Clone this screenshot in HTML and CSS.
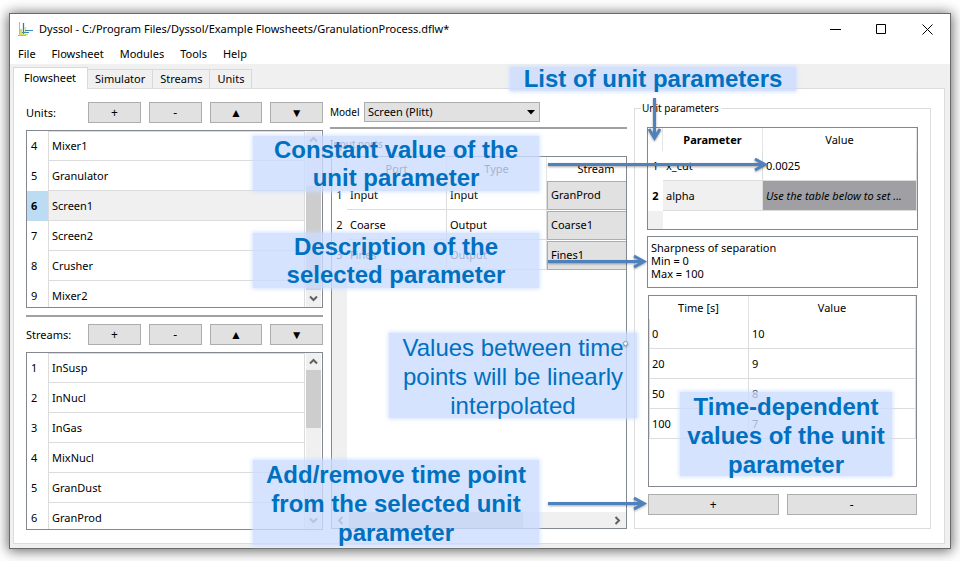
FILE: index.html
```html
<!DOCTYPE html>
<html lang="en">
<head>
<meta charset="utf-8">
<title>Dyssol</title>
<link rel="stylesheet" href="styles.css">
</head>
<body>
<main class="window">
  <header class="titlebar">
    <svg class="app-icon" width="16" height="16" viewBox="0 0 16 16" aria-hidden="true">
      <path d="M1.500 1v13" stroke="#8cc3d6" stroke-width="1" fill="none"/>
      <path d="M3 8v6" stroke="#d9dd52" stroke-width="2" fill="none"/>
      <path d="M5.500 2v12" stroke="#2a7fa8" stroke-width="1.300" fill="none"/>
      <path d="M7.500 6v5" stroke="#e3df6a" stroke-width="1.500" fill="none"/>
      <path d="M1 13.500h9" stroke="#dcdc5a" stroke-width="1.500" fill="none"/>
      <path d="M4 11.500h7M7 9.500h8" stroke="#3b8db5" stroke-width="1" fill="none"/>
      <path d="M0 14.500h8" stroke="#8cc3b0" stroke-width="1" fill="none"/>
    </svg>
    <h1 class="title">Dyssol - C:/Program Files/Dyssol/Example Flowsheets/GranulationProcess.dflw*</h1>
    <button class="win-btn" aria-label="Minimize"><svg width="11" height="11" viewBox="0 0 11 11"><path d="M0 5.500h11"/></svg></button>
    <button class="win-btn" aria-label="Maximize"><svg width="11" height="11" viewBox="0 0 11 11"><path d="M.5 .5h9v9h-9z"/></svg></button>
    <button class="win-btn" aria-label="Close"><svg width="11" height="11" viewBox="0 0 11 11"><path d="M.5 .5l10 10M10.500 .5l-10 10"/></svg></button>
  </header>
  <nav class="menu">
    <button>File</button><button>Flowsheet</button><button>Modules</button><button>Tools</button><button>Help</button>
  </nav>
  <div class="tabs" role="tablist">
    <button class="tab active" role="tab" aria-selected="true">Flowsheet</button>
    <button class="tab" role="tab">Simulator</button>
    <button class="tab" role="tab">Streams</button>
    <button class="tab" role="tab">Units</button>
  </div>
  <div class="pane">
    <section class="column">
      <div class="toolbar"><span>Units:</span><button class="btn">+</button><button class="btn">-</button><button class="btn">▲</button><button class="btn">▼</button></div>
      <div class="list">
        <table class="grid">
          <tbody>
            <tr><th>4</th><td>Mixer1</td></tr>
            <tr><th>5</th><td>Granulator</td></tr>
            <tr class="selected"><th>6</th><td>Screen1</td></tr>
            <tr><th>7</th><td>Screen2</td></tr>
            <tr><th>8</th><td>Crusher</td></tr>
            <tr><th>9</th><td>Mixer2</td></tr>
          </tbody>
        </table>
        <div class="scroll">
          <svg class="chev" viewBox="0 0 9 7"><path d="M1 5.500L4.500 2L8 5.500"/></svg>
          <div class="track end"><div class="thumb long"></div></div>
          <svg class="chev" viewBox="0 0 9 7"><path d="M1 1.500L4.500 5L8 1.500"/></svg>
        </div>
      </div>
      <hr class="split">
      <div class="toolbar"><span>Streams:</span><button class="btn">+</button><button class="btn">-</button><button class="btn">▲</button><button class="btn">▼</button></div>
      <div class="list">
        <table class="grid">
          <tbody>
            <tr><th>1</th><td>InSusp</td></tr>
            <tr><th>2</th><td>InNucl</td></tr>
            <tr><th>3</th><td>InGas</td></tr>
            <tr><th>4</th><td>MixNucl</td></tr>
            <tr><th>5</th><td>GranDust</td></tr>
            <tr><th>6</th><td>GranProd</td></tr>
          </tbody>
        </table>
        <div class="scroll">
          <svg class="chev" viewBox="0 0 9 7"><path d="M1 5.500L4.500 2L8 5.500"/></svg>
          <div class="track"><div class="thumb"></div></div>
          <svg class="chev" viewBox="0 0 9 7"><path d="M1 1.500L4.500 5L8 1.500"/></svg>
        </div>
      </div>
    </section>

    <section class="column model">
      <div class="model-row">
        <label for="model">Model</label>
        <span class="combo">
          <select id="model"><option>Screen (Plitt)</option></select>
          <svg class="caret" width="8" height="5" viewBox="0 0 8 5" aria-hidden="true"><path d="M0 0h8L4 4.500z"/></svg>
        </span>
      </div>
      <hr class="split">
      <div class="caption">Input ports</div>
      <div class="ports">
        <div class="ports-body">
          <table class="grid fixed">
            <colgroup><col class="c-num"><col class="c-mid"><col class="c-mid"><col></colgroup>
            <thead><tr><th></th><th>Port</th><th>Type</th><th class="stream">Stream</th></tr></thead>
            <tbody>
              <tr><th>1</th><td>Input</td><td>Input</td><td class="cell-btn"><button>GranProd</button></td></tr>
              <tr><th>2</th><td>Coarse</td><td>Output</td><td class="cell-btn"><button>Coarse1</button></td></tr>
              <tr><th>3</th><td>Fines</td><td>Output</td><td class="cell-btn"><button>Fines1</button></td></tr>
            </tbody>
          </table>
        </div>
        <div class="scroll horizontal">
          <svg class="chev" viewBox="0 0 7 9"><path d="M5.500 1L2 4.500L5.500 8"/></svg>
          <div class="track"><div class="thumb"></div></div>
          <svg class="chev" viewBox="0 0 7 9"><path d="M1.500 1L5 4.500L1.500 8"/></svg>
        </div>
      </div>
    </section>

    <fieldset class="params">
      <legend>Unit parameters</legend>
      <div class="param-table">
        <table class="grid fixed">
          <colgroup><col class="c-num"><col class="c-mid"><col></colgroup>
          <thead><tr><th></th><th class="strong">Parameter</th><th>Value</th></tr></thead>
          <tbody>
            <tr><th>1</th><td>x_cut</td><td>0.0025</td></tr>
            <tr class="current"><th>2</th><td>alpha</td><td class="locked">Use the table below to set ...</td></tr>
          </tbody>
        </table>
      </div>
      <p class="description">Sharpness of separation<br>Min = 0<br>Max = 100</p>
      <div class="time-table">
        <table class="grid fixed times">
          <colgroup><col class="c-mid"><col></colgroup>
          <thead><tr><th>Time [s]</th><th>Value</th></tr></thead>
          <tbody>
            <tr><td>0</td><td>10</td></tr>
            <tr><td>20</td><td>9</td></tr>
            <tr><td>50</td><td>8</td></tr>
            <tr><td>100</td><td>7</td></tr>
          </tbody>
        </table>
      </div>
      <div class="time-actions"><button class="btn">+</button><button class="btn">-</button></div>
    </fieldset>
  </div>
</main>

<div class="note note-list">List of unit parameters</div>
<div class="note note-constant">Constant value of the<br>unit parameter</div>
<div class="note note-description">Description of the<br>selected parameter</div>
<div class="note note-values">Values between time<br>points will be linearly<br>interpolated</div>
<div class="note note-time">Time-dependent<br>values of the unit<br>parameter</div>
<div class="note note-add">Add/remove time point<br>from the selected unit<br>parameter</div>
<svg class="arrows" width="960" height="561" viewBox="0 0 960 561" aria-hidden="true">
  <path d="M654.500 98V137M649 129L654.500 138L660 129"/>
  <path d="M548 164.500H764M755 159L765 164.500L755 170"/>
  <path d="M548 261.500H643M634 256L644 261.500L634 267"/>
  <path d="M548 503.500H643M634 498L644 503.500L634 509"/>
  <circle cx="625.500" cy="343.500" r="2"/>
</svg>
</body>
</html>
```

FILE: styles.css
```css
* { box-sizing: border-box; }

body {
  margin: 0;
  height: 100vh;
  padding: 13px 9px 12px;
  display: flex;
  position: relative;
  overflow: hidden;
  background: #fff;
  color: #000;
  font: 11px/16px "Noto Sans", "Open Sans", sans-serif;
}

button, select {
  font: inherit;
  color: inherit;
  margin: 0;
  padding: 0;
  border: 0;
  border-radius: 0;
  background: none;
}

.window {
  flex: 1;
  min-width: 0;
  display: flex;
  flex-direction: column;
  padding-bottom: 4px;
  border: 1px solid #6a6a6a;
  background: #f0f0f0;
  box-shadow: 0 1px 12px 1px rgba(0, 0, 0, .6);
}

.titlebar {
  height: 30px;
  flex: none;
  display: flex;
  align-items: center;
  padding-left: 8px;
  background: #fff;
}
.app-icon { margin-right: 5px; }
.title {
  flex: 1;
  margin: 0;
  font-size: 11px;
  font-weight: 400;
  white-space: nowrap;
}
.win-btn {
  width: 46px;
  height: 30px;
  display: flex;
  align-items: center;
  justify-content: center;
}
.win-btn path { fill: none; stroke: #000; stroke-width: 1; }

.menu {
  height: 20px;
  flex: none;
  display: flex;
  gap: 16px;
  padding-left: 8px;
  background: #fff;
}

.tabs {
  height: 24px;
  flex: none;
  display: flex;
  align-items: flex-end;
  padding-left: 3px;
}
.tab {
  height: 19px;
  padding: 0 7px;
  border: 1px solid #d9d9d9;
  border-left: 0;
  border-bottom: 0;
}
.tab.active {
  height: 22px;
  margin-bottom: -1px;
  padding: 0 11px 1px 10px;
  position: relative;
  border-left: 1px solid #d9d9d9;
  background: #fff;
}

.pane {
  flex: 1;
  min-height: 0;
  margin: 0 5px 0 3px;
  padding: 13px 13px 13px 12px;
  display: grid;
  grid-template-columns: repeat(3, minmax(0, 1fr));
  grid-template-rows: minmax(0, 1fr);
  gap: 7px;
  border: 1px solid #dcdcdc;
  background: #fff;
}

.column {
  display: flex;
  flex-direction: column;
  gap: 7px;
  min-height: 0;
}

.toolbar {
  flex: none;
  height: 21px;
  display: grid;
  grid-template-columns: 54px repeat(4, 1fr);
  gap: 8px;
  align-items: center;
}
.btn {
  height: 21px;
  border: 1px solid #adadad;
  background: #e1e1e1;
  font-size: 12px;
  line-height: 18px;
}

.split {
  flex: none;
  width: 100%;
  height: 2px;
  margin: 0;
  border: 0;
  background: #a0a0a0;
}

.list, .ports, .param-table, .time-table {
  border: 1px solid #828790;
  background: #fff;
  overflow: hidden;
}
.list { flex: 1 1 0; min-height: 0; display: flex; align-items: flex-start; }

.grid {
  width: 100%;
  border-collapse: separate;
  border-spacing: 0;
}
.fixed { table-layout: fixed; }
.c-num { width: 15px; }
.c-mid { width: 100px; }
.grid th, .grid td { padding: 0 3px; font-weight: 400; white-space: nowrap; }
.grid tbody tr { height: 30px; }
.grid thead tr { height: 23px; }
.grid tbody th { width: 22px; text-align: left; border-right: 1px solid #dcdcdc; }
.grid td { border-right: 1px solid #dcdcdc; border-bottom: 1px solid #dcdcdc; }
.grid thead th { border-right: 1px solid #e5e5e5; text-align: center; }
.grid thead .strong { font-weight: 700; }
.fixed tbody th { text-align: center; padding: 0; border-right: 0; }
.times tbody td:first-child { padding-left: 2px; border-left: 1px solid #dcdcdc; }

.list .grid { flex: 1; }
.list .grid th { padding-left: 4px; }
.list .grid tr:first-child td { border-top: 1px solid #dcdcdc; }
.selected th { background: #bcdcf4; }
.list .selected th, .fixed .current th { font-weight: 700; }
.selected td, .current td { background: #f0f0f0; }

.scroll {
  flex: none;
  align-self: stretch;
  width: 15px;
  margin: 0 1px;
  display: flex;
  flex-direction: column;
  align-items: center;
  background: #f0f0f0;
}
.chev { flex: none; width: 9px; height: 7px; margin: 5px 0; }
.chev path { fill: none; stroke: #606060; stroke-width: 2; }
.track { flex: 1; width: 100%; min-height: 0; display: flex; flex-direction: column; }
.track.end { justify-content: flex-end; }
.thumb { height: 41%; background: #cdcdcd; }
.thumb.long { height: 73%; }

.model-row {
  flex: none;
  height: 20px;
  margin-bottom: -2px;
  display: flex;
  align-items: center;
}
.model-row label { width: 34px; font-size: 10px; }
.combo { position: relative; width: 176px; height: 20px; }
.combo select {
  width: 100%;
  height: 100%;
  padding-left: 3px;
  appearance: none;
  border: 1px solid #adadad;
  background: #e1e1e1;
}
.caret { position: absolute; right: 5px; top: 8px; }

.caption { flex: none; height: 14px; line-height: 14px; margin: 1px 0 -2px; font-size: 10px; }
.model { padding-bottom: 1px; }
.ports {
  flex: 1 1 0;
  min-height: 0;
  margin-left: 1px;
  display: flex;
  flex-direction: column;
}
.ports-body {
  flex: 1;
  min-height: 0;
  background: linear-gradient(90deg, #f0f0f0 15px, #fff 15px);
}
.ports-body .grid th { background: #fff; }
.grid thead .stream { padding-left: 22px; border-right: 0; }
.grid .cell-btn { padding: 0; border: 0; height: 30px; }
.cell-btn button {
  display: block;
  width: 100%;
  height: 29px;
  padding: 0 3px;
  text-align: left;
  border: 1px solid #adadad;
  border-right: 0;
  background: #e1e1e1;
}
.horizontal {
  flex-direction: row;
  width: auto;
  height: 16px;
  margin: 0;
}
.horizontal .chev { width: 7px; height: 9px; margin: 0 5px; }
.horizontal .track { height: 100%; flex-direction: row; }
.horizontal .thumb { width: 67%; height: 100%; }

.params {
  min-width: 0;
  min-height: 0;
  margin: 0 0 1px;
  padding: 13px 12px;
  display: flex;
  flex-direction: column;
  gap: 6px;
  border: 1px solid #dcdcdc;
}
.params legend { margin-left: -6px; padding: 0 2px 0 1px; font-size: 10px; line-height: 12px; }
.param-table {
  flex: none;
  height: 103px;
  background: linear-gradient(90deg, #f0f0f0 15px, #fff 15px);
}
.param-table .grid th { background: #fff; }
.grid .locked { background: #a0a0a4; font-style: italic; }
.description {
  flex: none;
  height: 52px;
  margin: 0;
  padding: 4px 3px;
  border: 1px solid #828790;
  line-height: 13px;
}
.time-table { flex: 1; min-height: 0; margin: 1px; }
.time-actions {
  display: grid;
  grid-template-columns: 1fr 1fr;
  gap: 8px;
  margin: 0 1px;
}

.note {
  position: absolute;
  color: #0070c0;
  background: rgba(202, 220, 255, .8);
  box-shadow: 0 0 4px 1px rgba(202, 220, 255, .8);
  font: 700 24px/29px "Liberation Sans", Arial, sans-serif;
  text-align: center;
  white-space: nowrap;
}
.note-list { left: 510px; top: 67px; width: 286px; height: 24px; line-height: 24px; }
.note-constant { left: 253px; top: 136px; width: 286px; height: 55px; line-height: 28px; }
.note-description { left: 253px; top: 233px; width: 286px; height: 55px; line-height: 28px; }
.note-values { left: 389px; top: 333px; width: 248px; height: 85px; }
.note-values { font-weight: 400; }
.note-time { left: 680px; top: 392px; width: 212px; height: 84px; }
.note-add { left: 253px; top: 460px; width: 286px; height: 85px; }

.arrows {
  position: absolute;
  left: 0;
  top: 0;
  pointer-events: none;
  filter: drop-shadow(0 1px 1px rgba(0, 0, 0, .35));
}
.arrows path { fill: none; stroke: #4f81bd; stroke-width: 3; }
.arrows circle { fill: #fff; stroke: #8c96b4; stroke-width: 1; }
```
